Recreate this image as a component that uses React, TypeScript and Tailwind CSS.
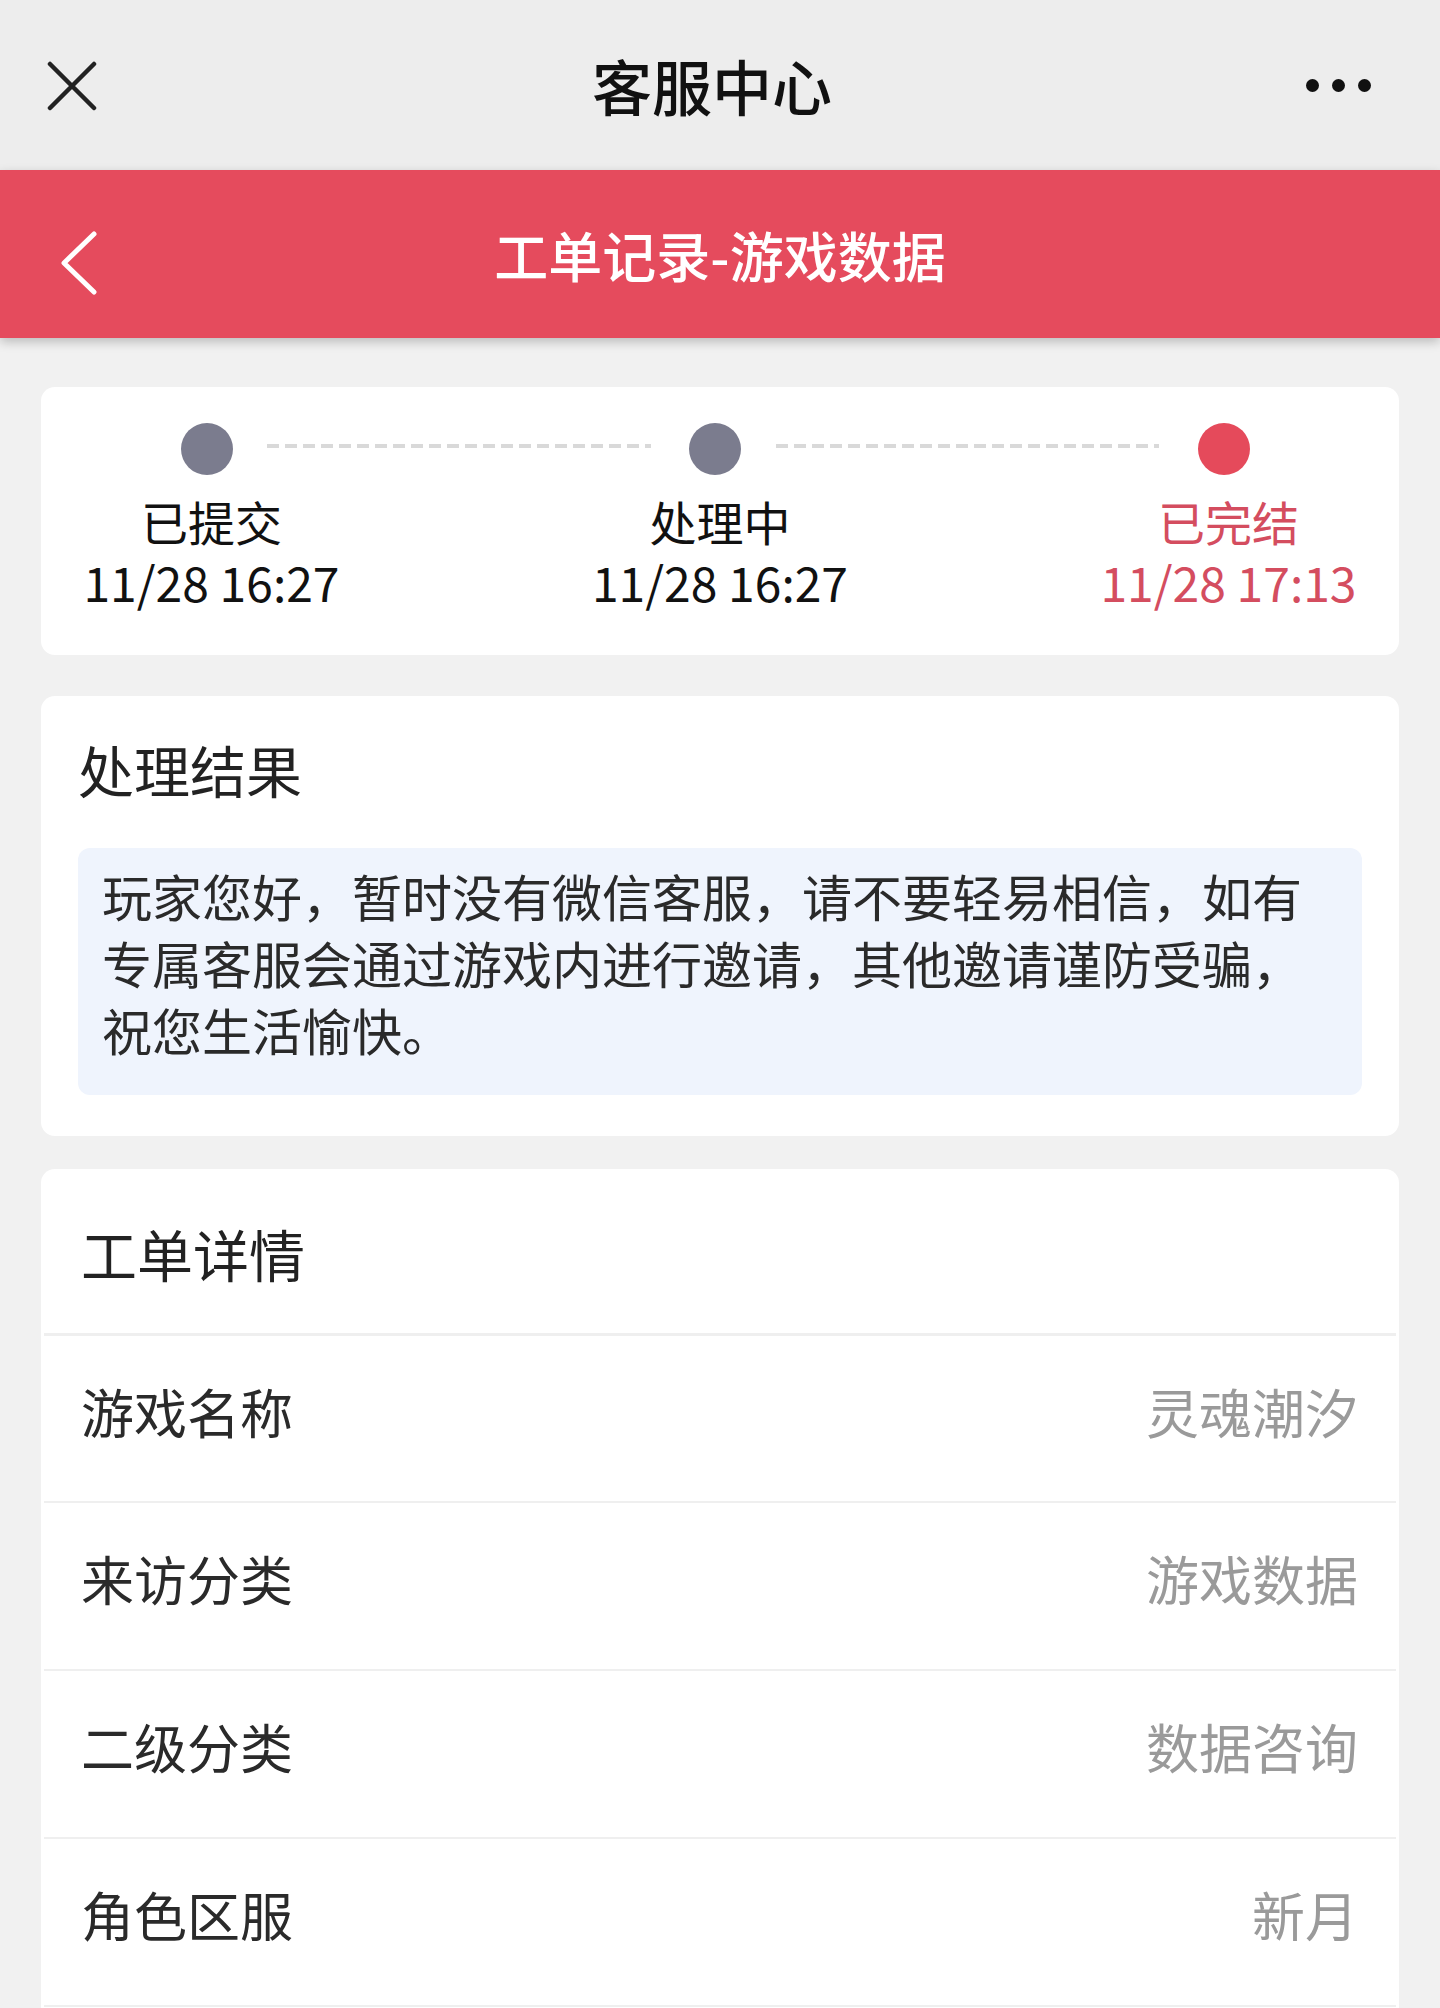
const steps = [
  { label: "已提交", time: "11/28 16:27", done: true },
  { label: "处理中", time: "11/28 16:27", done: true },
  { label: "已完结", time: "11/28 17:13", done: false },
];

const details = [
  { k: "游戏名称", v: "灵魂潮汐" },
  { k: "来访分类", v: "游戏数据" },
  { k: "二级分类", v: "数据咨询" },
  { k: "角色区服", v: "新月" },
];

function Step({ label, time, last }: { label: string; time: string; last: boolean }) {
  return (
    <div className="flex w-[261px] shrink-0 flex-col items-center">
      <span className={`mr-[10px] h-[52px] w-[52px] rounded-full ${last ? "bg-[#e54a5b]" : "bg-[#7b7c8e]"}`} />
      <span className={`mt-[18px] text-[47px] leading-[56px] ${last ? "text-[#d44d5f]" : "text-[#111]"}`}>{label}</span>
      <span className={`mt-[2px] whitespace-nowrap text-[48px] leading-[60px] ${last ? "text-[#d44d5f]" : "text-[#111]"}`}>{time}</span>
    </div>
  );
}

function Dashes() {
  return (
    <div className="-ml-[75px] -mr-[61px] mt-[21px] h-[4px] flex-1 bg-[repeating-linear-gradient(90deg,#d9d9d9_0px,#d9d9d9_12px,transparent_12px,transparent_18px)]" />
  );
}

export default function App() {
  return (
    <div className="min-h-screen bg-[#f1f1f1] font-['Noto_Sans_CJK_SC','Noto_Sans',sans-serif]">
      {/* wechat top bar */}
      <div className="grid h-[170px] grid-cols-[300px_1fr_300px] items-center bg-[#ededed]">
        <div className="pl-[47px]">
          <svg width="50" height="50" viewBox="0 0 50 50" className="mt-[1px]">
            <path d="M3 3 L47 47 M47 3 L3 47" stroke="#222" strokeWidth="4.5" strokeLinecap="round" />
          </svg>
        </div>
        <div className="pr-[16px] text-center text-[60px] font-medium leading-none text-[#111]">客服中心</div>
        <div className="flex justify-end gap-[13px] pr-[69px]">
          <span className="h-[13px] w-[13px] rounded-full bg-[#111]" />
          <span className="h-[13px] w-[13px] rounded-full bg-[#111]" />
          <span className="h-[13px] w-[13px] rounded-full bg-[#111]" />
        </div>
      </div>

      {/* red header */}
      <div className="relative z-10 grid h-[168px] grid-cols-[300px_1fr_300px] items-center bg-[#e54b5d] shadow-[0_4px_10px_rgba(0,0,0,0.22)]">
        <div className="pl-[60px] pt-[18px]">
          <svg width="38" height="64" viewBox="0 0 38 64">
            <path d="M34 3 L4 32 L34 61" stroke="#fff" strokeWidth="5" fill="none" strokeLinecap="round" strokeLinejoin="round" />
          </svg>
        </div>
        <div className="pt-[2px] text-center text-[54px] font-medium leading-none text-white">工单记录-游戏数据</div>
        <div />
      </div>

      <div className="px-[41px] pt-[49px]">
        {/* progress */}
        <div className="flex rounded-[14px] bg-white px-[40px] pb-[44px] pt-[36px]">
          <Step {...steps[0]} last={false} />
          <Dashes />
          <Step {...steps[1]} last={false} />
          <Dashes />
          <Step {...steps[2]} last={true} />
        </div>

        {/* result */}
        <div className="mt-[41px] rounded-[14px] bg-white px-[37px] pb-[41px] pt-[33px]">
          <div className="text-[56px] leading-[80px] text-[#222]">处理结果</div>
          <div className="mt-[39px] rounded-[12px] bg-[#eff4fd] pb-[32px] pl-[24px] pr-[24px] pt-[14px] text-[50px] leading-[67px] text-[#2a2a2a]">
            玩家您好，暂时没有微信客服，请不要轻易相信，如有专属客服会通过游戏内进行邀请，其他邀请谨防受骗，祝您生活愉快。
          </div>
        </div>

        {/* details */}
        <div className="mt-[33px] rounded-[14px] bg-white pb-[60px]">
          <div className="flex h-[164px] items-center pl-[40px] pt-[4px] text-[56px] text-[#222]">工单详情</div>
          {details.map((d, i) => (
            <div
              key={d.k}
              className={`mx-[3px] flex h-[168px] items-center justify-between border-[#efefef] pb-[14px] pl-[37px] pr-[38px] ${i === 0 ? "border-t-[3px]" : "border-t-[2px]"}`}
            >
              <span className="text-[53px] text-[#2a2a2a]">{d.k}</span>
              <span className="text-[53px] text-[#9a9a9a]">{d.v}</span>
            </div>
          ))}
          <div className="mx-[3px] h-[80px] border-t-[2px] border-[#efefef]" />
        </div>
      </div>
    </div>
  );
}
